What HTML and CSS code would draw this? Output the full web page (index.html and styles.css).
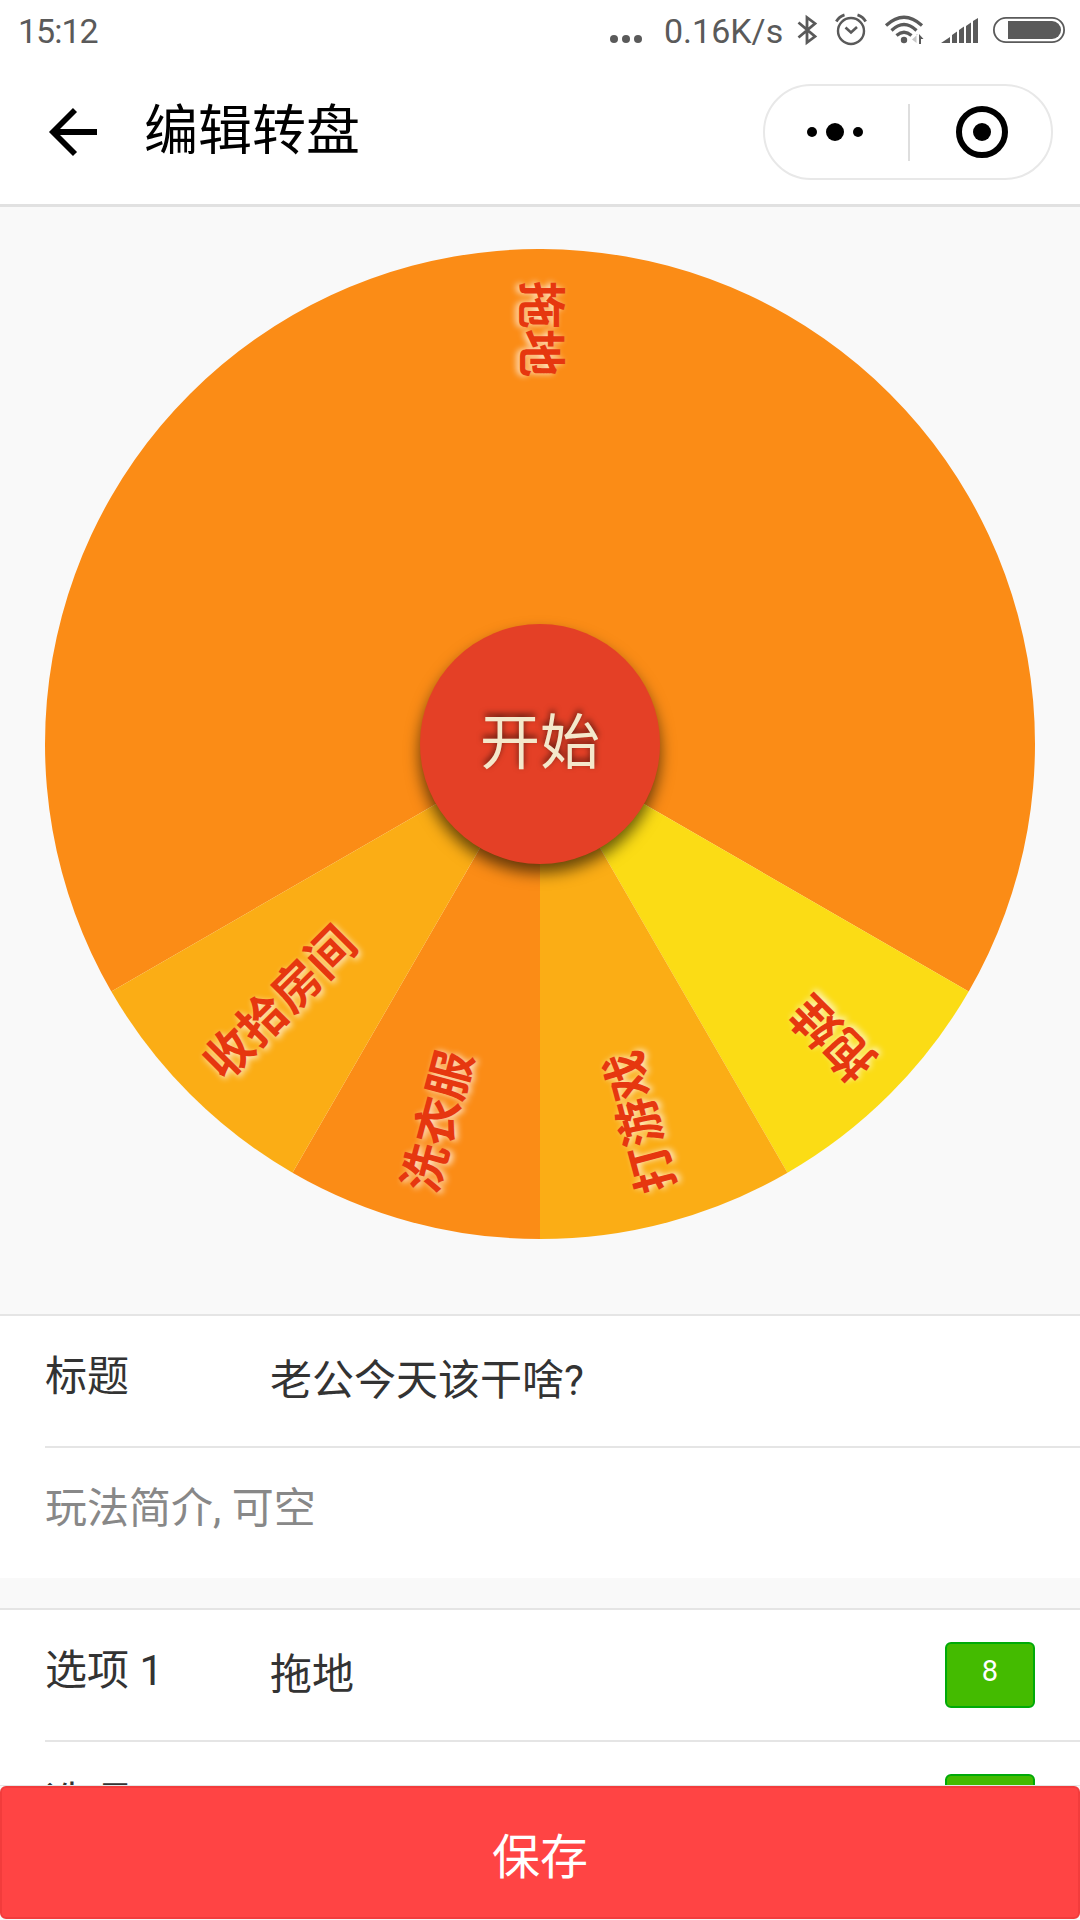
FILE: index.html
```html
<!DOCTYPE html>
<html lang="zh-CN">
<head>
    <meta charset="UTF-8">
    <meta name="viewport" content="width=device-width, initial-scale=1.0">
    <title>编辑转盘</title>
    <link rel="stylesheet" href="styles.css">
</head>
<body>
    <div class="page">
        <!-- Status bar -->
        <div class="status-bar">
            <span class="time">15:12</span>
            <div class="status-right">
                <svg class="icon-more" width="32" height="50" viewBox="0 0 32 50" fill="#5a5a5a">
                    <circle cx="4" cy="39" r="4"/>
                    <circle cx="16" cy="39" r="4"/>
                    <circle cx="28" cy="39" r="4"/>
                </svg>
                <span class="speed">0.16K/s</span>
                <svg class="icons" width="272" height="60" viewBox="793 0 272 60" fill="none" stroke="#5a5a5a">
                    <!-- bluetooth -->
                    <path d="M798.5 22.5L815 36.5L807 42.5V17.500L815 23.500L798.5 37.5" stroke-width="2.8"/>
                    <!-- alarm -->
                    <circle cx="851" cy="31" r="13" stroke-width="2.4"/>
                    <path d="M845.500 27.500L851 32.500L857 27" stroke-width="2.600"/>
                    <path d="M836.300 21.500Q839 16.500 844.500 14.800M865.700 21.500Q863 16.500 857.500 14.800" stroke-width="2.800"/>
                    <!-- wifi -->
                    <circle cx="904" cy="40" r="3.2" fill="#5a5a5a" stroke="none"/>
                    <path d="M886 25.500Q904 9 922 25.500" stroke-width="3.2"/>
                    <path d="M891.500 30.500Q904 18.500 916.500 30.500" stroke-width="3.2"/>
                    <path d="M896.500 35.500Q904 29 911.500 35.500" stroke-width="3.2"/>
                    <path d="M916.500 43V34H918L912 39.500L916.500 43Z" fill="#c8c8c8" stroke="none"/>
                    <path d="M919 44V34L923.500 39H921V44Z" fill="#5a5a5a" stroke="none"/>
                    <!-- signal -->
                    <path d="M941 43L950 37V43ZM952 43V35L957 31.500V43ZM959 43V30L964 26.500V43ZM966 43V26L971 22.500V43ZM973 43V21L978 18V43Z" fill="#5a5a5a" stroke="none"/>
                    <!-- battery -->
                    <rect x="993.900" y="17.900" width="70.200" height="24.200" rx="12.100" stroke-width="1.800"/>
                    <path d="M1008 21H1052A9 9 0 0 1 1052 39H1008Z" fill="#5a5a5a" stroke="none"/>
                </svg>
            </div>
        </div>

        <!-- Navigation bar -->
        <div class="nav-bar">
            <svg class="back" width="52" height="52" viewBox="47 106 52 52" fill="none" stroke="#000">
                <path d="M75 110L53 132L75 154" stroke-width="5.700"/>
                <path d="M53 132H97" stroke-width="6"/>
            </svg>
            <h1>编辑转盘</h1>
            <div class="capsule">
                <svg width="143" height="92" viewBox="765 86 143 92">
                    <circle cx="812" cy="132" r="5"/>
                    <circle cx="835" cy="132" r="9"/>
                    <circle cx="858" cy="132" r="5"/>
                </svg>
                <span class="divider"></span>
                <svg width="141" height="92" viewBox="910 86 141 92">
                    <circle cx="982" cy="132" r="23" fill="none" stroke="#000" stroke-width="6"/>
                    <circle cx="982" cy="132" r="9"/>
                </svg>
            </div>
        </div>

        <!-- Wheel -->
        <div class="wheel-area">
            <div class="wheel">
                <svg class="slices" width="990" height="990" viewBox="0 0 990 990">
                    <path d="M495 495L66.320 742.500A495 495 0 1 1 923.680 742.500Z" fill="#fb8c16"/>
                    <path d="M495 495L923.680 742.500A495 495 0 0 1 742.500 923.680Z" fill="#fbdc15"/>
                    <path d="M495 495L742.500 923.680A495 495 0 0 1 495 990Z" fill="#fbad15"/>
                    <path d="M495 495V990A495 495 0 0 1 247.500 923.680Z" fill="#fb8c16"/>
                    <path d="M495 495L247.500 923.680A495 495 0 0 1 66.320 742.500Z" fill="#fbad15"/>
                </svg>
                <span class="label label-1">拖地</span>
                <span class="label label-2">抱娃</span>
                <span class="label label-3">打游戏</span>
                <span class="label label-4">洗衣服</span>
                <span class="label label-5">收拾房间</span>
                <div class="start">开始</div>
            </div>
        </div>

        <!-- Form -->
        <div class="cells">
            <div class="cell">
                <span class="cell-label">标题</span>
                <span class="cell-value">老公今天该干啥?</span>
            </div>
            <div class="cell">
                <span class="placeholder">玩法简介, 可空</span>
            </div>
        </div>

        <div class="cells options">
            <div class="cell">
                <span class="cell-label">选项 1</span>
                <span class="cell-value">拖地</span>
                <button class="weight">8</button>
            </div>
            <div class="cell">
                <span class="cell-label">选项 2</span>
                <span class="cell-value">抱娃</span>
                <button class="weight">1</button>
            </div>
        </div>

        <div class="footer">
            <button class="save">保存</button>
        </div>
    </div>
</body>
</html>
```
FILE: styles.css
```css
* {
    margin: 0;
    padding: 0;
    box-sizing: border-box;
}

body {
    font-family: Roboto, "Noto Sans CJK SC", sans-serif;
    background-color: #f9f9f9;
    color: #333;
}

.page {
    width: 1080px;
    height: 1920px;
    overflow: hidden;
}

svg {
    display: block;
    flex-shrink: 0;
}

/* Status bar */
.status-bar {
    height: 60px;
    padding: 0 15px 0 18px;
    display: flex;
    justify-content: space-between;
    background-color: #fff;
    color: #5a5a5a;
    font-size: 34px;
    line-height: 63px;
}

.time {
    letter-spacing: -1px;
}

.status-right {
    display: flex;
}

.speed {
    width: 129px;
    margin-left: 22px;
}

/* Navigation bar */
.nav-bar {
    height: 147px;
    padding: 0 27px 0 47px;
    display: flex;
    align-items: center;
    background-color: #fff;
    border-bottom: 3px solid #e1e1e1;
}

.nav-bar h1 {
    flex: 1;
    margin-left: 45px;
    font-size: 54px;
    font-weight: 400;
    line-height: 80px;
    color: #000;
}

.capsule {
    width: 290px;
    height: 96px;
    display: flex;
    align-items: center;
    border: 2px solid #e8e8e8;
    border-radius: 48px;
}

.divider {
    width: 2px;
    height: 57px;
    background-color: #dedede;
}

/* Wheel */
.wheel-area {
    height: 1107px;
    padding: 42px 45px 0;
}

.wheel {
    position: relative;
    width: 990px;
    height: 990px;
}

/* every label starts at the rim and runs towards the centre */
.label {
    position: absolute;
    left: 32px;
    top: 465px;
    width: 463px;
    height: 60px;
    transform-origin: 463px 30px;
    font-size: 48px;
    font-weight: 700;
    line-height: 60px;
    color: #e6370f;
    text-shadow: 0 3px 6px rgba(255, 255, 255, 0.8);
}

.label-1 {
    transform: rotate(90deg);
}

.label-2 {
    transform: rotate(225deg);
}

.label-3 {
    transform: rotate(255deg);
}

.label-4 {
    transform: rotate(285deg);
}

.label-5 {
    transform: rotate(315deg);
}

.start {
    position: absolute;
    left: 375px;
    top: 375px;
    width: 240px;
    height: 240px;
    border-radius: 50%;
    background-color: #e44026;
    box-shadow: 0 9px 15px rgba(0, 0, 0, 0.6);
    color: #f4e8cb;
    font-size: 60px;
    line-height: 240px;
    text-align: center;
    text-shadow: 0 -3px 6px rgba(0, 0, 0, 0.6);
}

.start::before {
    content: "";
    position: absolute;
    z-index: -1;
    left: 45px;
    top: -48px;
    border: 75px solid transparent;
    border-top-width: 0;
    border-bottom-color: #e44026;
}

/* Form */
.cells {
    background-color: #fff;
    border-top: 2px solid #e5e5e5;
    font-size: 42px;
    line-height: 60px;
}

.cells .cell {
    height: 132px;
    margin-left: 45px;
    padding-right: 45px;
    display: flex;
    align-items: center;
    border-top: 2px solid #e5e5e5;
}

.cells .cell:first-child {
    height: 130px;
    border-top: none;
}

.cell-label {
    width: 225px;
    padding-bottom: 8px;
}

.cell-value {
    flex: 1;
}

.placeholder {
    color: #888;
    padding-bottom: 8px;
}

.options {
    margin-top: 30px;
}

.weight {
    width: 90px;
    height: 66px;
    padding-bottom: 8px;
    border: 2px solid #00aa08;
    border-radius: 6px;
    background-color: #44bb00;
    color: #fff;
    font-family: inherit;
    font-size: 29px;
}

/* Save button */
.footer {
    position: fixed;
    left: 0;
    top: 1785px;
    width: 1080px;
    height: 135px;
    background-color: #f9f9f9;
    border-top: 1px solid #e5e5e5;
}

.save {
    width: 1080px;
    height: 133px;
    border: 2px solid #f23c3c;
    border-radius: 6px;
    background-color: #ff4444;
    color: #fff;
    font-family: inherit;
    font-size: 48px;
}
```
